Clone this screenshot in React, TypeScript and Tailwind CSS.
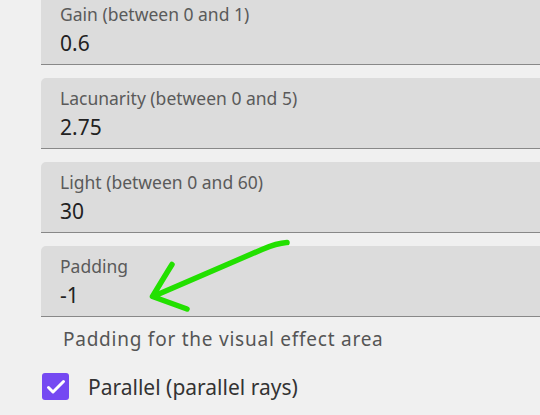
const fields = [
  { label: 'Gain (between 0 and 1)', value: '0.6' },
  { label: 'Lacunarity (between 0 and 5)', value: '2.75' },
  { label: 'Light (between 0 and 60)', value: '30' },
  { label: 'Padding', value: '-1' },
];

function FilledField({ label, value }: { label: string; value: string }) {
  return (
    <div className="h-[71px] rounded-tl-[5px] bg-[#dcdcdc] border-b-[1.5px] border-[#888] pl-[19px] pt-[10px]">
      <div className="text-[17.5px] leading-[20px] text-[#5a5a5a]">{label}</div>
      <div className="mt-[5px] text-[21px] leading-[28px] text-[#222]">{value}</div>
    </div>
  );
}

export default function App() {
  return (
    <div
      className="relative h-[415px] w-[540px] overflow-hidden bg-[#f0f0f0] pl-[41px]"
      style={{ fontFamily: '"Noto Sans", "Open Sans", sans-serif' }}
    >
      <div className="-mt-[6px] flex flex-col gap-[13px]">
        {fields.map((f) => (
          <FilledField key={f.label} label={f.label} value={f.value} />
        ))}
      </div>
      <p className="mt-[11px] pl-[22px] text-[19px] leading-[22px] tracking-[0.04em] text-[#555]">
        Padding for the visual effect area
      </p>
      <label className="mt-[23px] flex items-center gap-[19px] pl-[1px]">
        <span className="flex h-[27px] w-[27px] items-center justify-center rounded-[3px] bg-[#7549f2]">
          <svg viewBox="0 0 24 24" className="h-[24px] w-[24px]" fill="none" stroke="white" strokeWidth="3" strokeLinecap="round" strokeLinejoin="round">
            <path d="M4.5 12.5l4.5 4.5L19.5 6.5" />
          </svg>
        </span>
        <span className="text-[21px] leading-[26px] text-[#333]">Parallel (parallel rays)</span>
      </label>

      <svg className="pointer-events-none absolute left-0 top-0" width="540" height="415" viewBox="0 0 540 415" fill="none">
        <path
          d="M287 242.5 C278 243 270 246 262 249.5 L153 296.5 M172 264.5 C166 274 160 284 152.5 296.5 L187 309"
          stroke="#22e000"
          strokeWidth="5.5"
          strokeLinecap="round"
          strokeLinejoin="round"
        />
      </svg>
    </div>
  );
}
